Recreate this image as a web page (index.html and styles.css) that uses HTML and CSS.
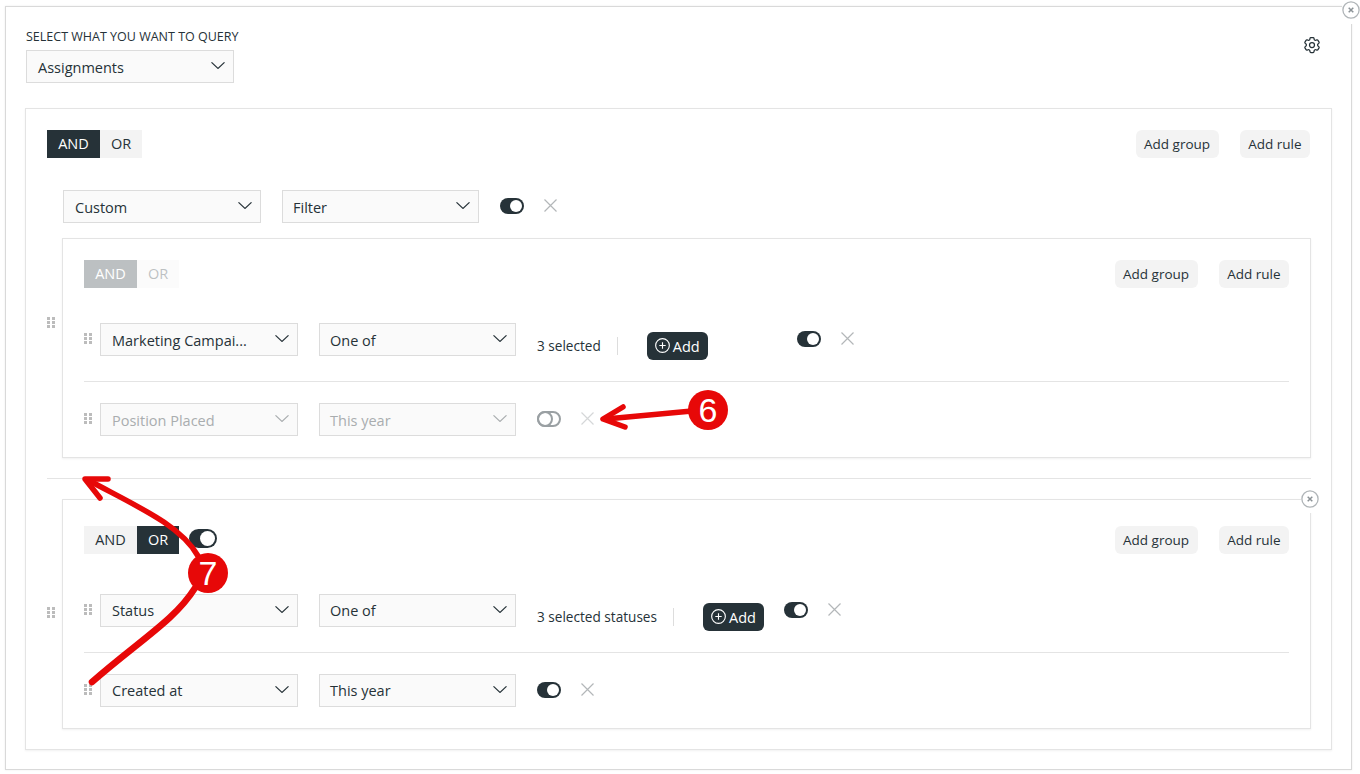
FILE: index.html
```html
<!DOCTYPE html>
<html lang="en">
<head>
    <meta charset="UTF-8">
    <meta name="viewport" content="width=device-width, initial-scale=1.0">
    <title>Query Builder</title>
    <link rel="stylesheet" href="styles.css">
</head>
<body>
    <svg class="sprite" aria-hidden="true">
        <symbol id="chevron" viewBox="0 0 14 7"><path d="M.5.3l6.5 6.2L13.500.3" fill="none" stroke="currentColor" stroke-width="1.1"/></symbol>
        <symbol id="cross" viewBox="0 0 13 13"><path d="M.5.5l12 12M12.500.5l-12 12" fill="none" stroke="currentColor" stroke-width="1.2"/></symbol>
        <symbol id="grip" viewBox="0 0 8 11"><path d="M0 0h3v3H0zM5 0h3v3H5zM0 4h3v3H0zM5 4h3v3H5zM0 8h3v3H0zM5 8h3v3H5z" fill="currentColor"/></symbol>
        <symbol id="closed" viewBox="0 0 18 18"><circle cx="9" cy="9" r="8.100" fill="#fff" stroke="#b0b5b8" stroke-width="1.3"/><path d="M6.700 6.700l4.600 4.600M11.300 6.700l-4.600 4.600" fill="none" stroke="#8b9296" stroke-width="1.500"/></symbol>
    </svg>

    <div class="panel">
        <button class="close-btn close-panel"><svg><use href="#closed"/></svg></button>

        <div class="panel-head">
            <div>
                <div class="query-label">SELECT WHAT YOU WANT TO QUERY</div>
                <div class="select select-query">Assignments<svg class="chevron"><use href="#chevron"/></svg></div>
            </div>
            <svg class="gear" viewBox="0 0 24 24" fill="none" stroke="#263238" stroke-width="1.5">
                <path d="M9.594 3.94c.09-.542.56-.94 1.11-.94h2.593c.55 0 1.02.398 1.11.94l.213 1.281c.063.374.313.686.645.87.074.04.147.083.22.127.325.196.72.257 1.075.124l1.217-.456a1.125 1.125 0 0 1 1.37.49l1.296 2.247a1.125 1.125 0 0 1-.26 1.431l-1.003.827c-.293.241-.438.613-.43.992a7.723 7.723 0 0 1 0 .255c-.008.378.137.75.43.991l1.004.827c.424.35.534.955.26 1.43l-1.298 2.247a1.125 1.125 0 0 1-1.369.491l-1.217-.456c-.355-.133-.75-.072-1.076.124a6.47 6.47 0 0 1-.22.128c-.331.183-.581.495-.644.869l-.213 1.281c-.09.543-.56.94-1.11.94h-2.594c-.55 0-1.019-.398-1.11-.94l-.213-1.281c-.062-.374-.312-.686-.644-.87a6.52 6.52 0 0 1-.22-.127c-.325-.196-.72-.257-1.076-.124l-1.217.456a1.125 1.125 0 0 1-1.369-.49l-1.297-2.247a1.125 1.125 0 0 1 .26-1.431l1.004-.827c.292-.24.437-.613.43-.991a6.932 6.932 0 0 1 0-.255c.007-.38-.138-.751-.43-.992l-1.004-.827a1.125 1.125 0 0 1-.26-1.43l1.297-2.247a1.125 1.125 0 0 1 1.37-.491l1.216.456c.356.133.751.072 1.076-.124.072-.044.146-.086.22-.128.332-.183.582-.495.644-.869l.214-1.28Z"/>
                <circle cx="12" cy="12" r="3"/>
            </svg>
        </div>

        <div class="card">
            <div class="group-head">
                <div class="logic">
                    <span class="logic-btn active">AND</span><span class="logic-btn">OR</span>
                </div>
                <div class="group-actions">
                    <button class="soft-btn">Add group</button>
                    <button class="soft-btn">Add rule</button>
                </div>
            </div>

            <div class="rule-line root-line">
                <div class="select select-first">Custom<svg class="chevron"><use href="#chevron"/></svg></div>
                <div class="select select-second">Filter<svg class="chevron"><use href="#chevron"/></svg></div>
                <span class="toggle on"></span>
                <svg class="cross"><use href="#cross"/></svg>
            </div>

            <div class="group-row">
                <svg class="grip grip-outer grip-one"><use href="#grip"/></svg>
                <div class="group group-one">
                    <div class="group-head">
                        <div class="logic muted">
                            <span class="logic-btn active">AND</span><span class="logic-btn">OR</span>
                        </div>
                        <div class="group-actions">
                            <button class="soft-btn">Add group</button>
                            <button class="soft-btn">Add rule</button>
                        </div>
                    </div>
                    <div class="rule first-rule">
                        <svg class="grip"><use href="#grip"/></svg>
                        <div class="select select-first">Marketing Campai...<svg class="chevron"><use href="#chevron"/></svg></div>
                        <div class="select select-second">One of<svg class="chevron"><use href="#chevron"/></svg></div>
                        <span class="picked">3 selected</span>
                        <button class="add-btn">
                            <svg viewBox="0 0 16 16" fill="none" stroke="#fff" stroke-width="1.2"><circle cx="8" cy="8" r="7.300"/><path d="M8 4.600v6.800M4.600 8h6.800"/></svg>
                            Add
                        </button>
                        <span class="toggle on toggle-far"></span>
                        <svg class="cross"><use href="#cross"/></svg>
                    </div>
                    <div class="rule disabled">
                        <svg class="grip"><use href="#grip"/></svg>
                        <div class="select select-first">Position Placed<svg class="chevron"><use href="#chevron"/></svg></div>
                        <div class="select select-second">This year<svg class="chevron"><use href="#chevron"/></svg></div>
                        <span class="toggle off"></span>
                        <svg class="cross"><use href="#cross"/></svg>
                    </div>
                </div>
            </div>

            <div class="group-divider"></div>

            <div class="group-row">
                <svg class="grip grip-outer grip-two"><use href="#grip"/></svg>
                <div class="group group-two">
                    <button class="close-btn close-group"><svg><use href="#closed"/></svg></button>
                    <div class="group-head">
                        <div class="logic">
                            <span class="logic-btn">AND</span><span class="logic-btn active">OR</span>
                            <span class="toggle on toggle-large"></span>
                        </div>
                        <div class="group-actions">
                            <button class="soft-btn">Add group</button>
                            <button class="soft-btn">Add rule</button>
                        </div>
                    </div>
                    <div class="rule first-rule">
                        <svg class="grip"><use href="#grip"/></svg>
                        <div class="select select-first">Status<svg class="chevron"><use href="#chevron"/></svg></div>
                        <div class="select select-second">One of<svg class="chevron"><use href="#chevron"/></svg></div>
                        <span class="picked">3 selected statuses</span>
                        <button class="add-btn">
                            <svg viewBox="0 0 16 16" fill="none" stroke="#fff" stroke-width="1.2"><circle cx="8" cy="8" r="7.300"/><path d="M8 4.600v6.800M4.600 8h6.800"/></svg>
                            Add
                        </button>
                        <span class="toggle on"></span>
                        <svg class="cross"><use href="#cross"/></svg>
                    </div>
                    <div class="rule">
                        <svg class="grip"><use href="#grip"/></svg>
                        <div class="select select-first">Created at<svg class="chevron"><use href="#chevron"/></svg></div>
                        <div class="select select-second">This year<svg class="chevron"><use href="#chevron"/></svg></div>
                        <span class="toggle on"></span>
                        <svg class="cross"><use href="#cross"/></svg>
                    </div>
                </div>
            </div>
        </div>
    </div>

    <!-- red callouts drawn over the screenshot -->
    <svg class="callouts" viewBox="0 0 1360 774">
        <g fill="none" stroke="#e70808" stroke-width="5.500" stroke-linecap="round" stroke-linejoin="round">
            <path d="M692 411L606 419"/>
            <path d="M623 407L603 419L625 427"/>
            <path d="M198 556C180 525 140 508 88 480"/>
            <path d="M108 479H85L100 498"/>
            <path d="M195 588C175 620 140 640 92 682" stroke-width="6.500"/>
        </g>
        <circle cx="708" cy="410" r="20" fill="#e70808"/>
        <circle cx="208" cy="573" r="20" fill="#e70808"/>
        <text class="callout-num" x="708" y="422">6</text>
        <text class="callout-num" x="208" y="585">7</text>
    </svg>
</body>
</html>
```
FILE: styles.css
```css
:root {
    --dark-color: #263238;
    --border-color: #e4e4e4;
    --field-border: #dcdcdc;
    --soft-color: #f3f3f3;
}
body {
    font-family: "Open Sans", Arial, sans-serif;
    font-size: 13.6px;
    color: var(--dark-color);
    background-color: #fff;
    margin: 0;
    position: relative;
    height: 774px;
    overflow: hidden;
}
button { font-family: inherit; color: inherit; }
.sprite { display: none; }

.panel {
    position: relative;
    box-sizing: border-box;
    width: 1347px;
    height: 764px;
    margin: 0 0 0 5px;
    top: 6px;
    padding: 22px 19px 19px;
    border: 1px solid #d9d9d9;
    box-shadow: 0 0 2px rgba(0, 0, 0, 0.08);
}
.panel-head {
    display: flex;
    justify-content: space-between;
    padding: 0 10px 0 1px;
    margin-bottom: 25px;
}
.query-label { font-size: 12.5px; line-height: 15px; margin-bottom: 6px; }
.gear { width: 20px; height: 20px; margin-top: 6px; }

/* white box hides the border just under the circle */
.close-btn {
    position: absolute;
    display: flex;
    align-items: flex-start;
    width: 18px;
    height: 23px;
    padding: 0;
    border: none;
    background-color: #fff;
}
.close-btn svg { display: block; width: 18px; height: 18px; }
.close-panel { top: -6px; right: -9px; }
.close-group { top: -10px; right: -9px; }

.card {
    box-sizing: border-box;
    height: 642px;
    padding: 21px 20px 0 21px;
    border: 1px solid var(--border-color);
    box-shadow: 0 1px 2px rgba(0, 0, 0, 0.06);
}

.select {
    position: relative;
    box-sizing: border-box;
    width: 198px;
    height: 33px;
    flex: none;
    padding-left: 11px;
    line-height: 33px;
    font-size: 14.5px;
    background-color: #fafafa;
    border: 1px solid var(--field-border);
}
.select-query { width: 208px; }
.select-second { width: 197px; margin-left: 21px; padding-left: 10px; }
.chevron { position: absolute; right: 8px; top: 11px; width: 14px; height: 7px; }
.group-two .select { line-height: 31px; }

.group-head { display: flex; justify-content: space-between; height: 28px; margin-right: 1px; }
.group-row > .group .group-head { margin-right: 0; }
.logic { display: flex; font-size: 14.5px; }
.logic-btn {
    height: 28px;
    padding: 0 11px;
    line-height: 28px;
    background-color: var(--soft-color);
}
.logic-btn.active { color: #fff; background-color: var(--dark-color); }
.logic-btn:first-child { width: 53px; box-sizing: border-box; padding: 0; text-align: center; }
.logic.muted { opacity: 0.3; }
.group-actions { display: flex; gap: 21px; }
.soft-btn {
    height: 28px;
    padding: 0 8.5px 1px;
    font-size: 13.5px;
    background-color: var(--soft-color);
    border: none;
    border-radius: 6px;
}

.rule-line, .rule { display: flex; align-items: flex-start; }
.root-line { margin: 32px 0 15px 16px; }

.toggle {
    box-sizing: border-box;
    display: block;
    flex: none;
    position: relative;
    width: 24px;
    height: 16px;
    margin: 8px 0 0 21px;
    border-radius: 8px;
    background-color: var(--dark-color);
}
.toggle::after {
    content: "";
    position: absolute;
    top: 2px;
    right: 2px;
    width: 12px;
    height: 12px;
    border-radius: 50%;
    background-color: #fff;
}
.toggle.off { background-color: #fff; border: 2px solid #9aa0a3; }
.toggle.off::after { top: -2px; right: auto; left: -2px; width: 16px; height: 16px; box-sizing: border-box; background: none; border: 2px solid #9aa0a3; }
.toggle-far { margin-left: 89px; }
.toggle-large { width: 28px; height: 19px; margin: 3px 0 0 10px; border-radius: 10px; }
.toggle-large::after { width: 15px; height: 15px; }

.cross { flex: none; width: 13px; height: 13px; margin: 9px 0 0 20px; color: #b3b7b9; }

.group-row { display: flex; }
.grip { flex: none; width: 8px; height: 11px; color: #bcbcbc; }
.grip-outer { margin-right: 7px; }
.grip-one { margin-top: 79px; }
.grip-two { margin-top: 108px; }

.group {
    position: relative;
    box-sizing: border-box;
    flex: 1;
    padding: 21px 21px 0;
    border: 1px solid var(--border-color);
    box-shadow: 0 1px 2px rgba(0, 0, 0, 0.06);
}
.group-one { height: 220px; }
.group-two { height: 230px; padding-top: 26px; }
.group-divider { height: 1px; margin: 20px 0; background-color: var(--border-color); }

.rule { padding: 21px 0; }
.rule .grip { margin: 10px 8px 0 0; }
/* the Add button makes this row 37px tall */
.first-rule { padding: 0 0 21px; margin-top: 35px; border-bottom: 1px solid var(--border-color); }
.group-two .first-rule { margin-top: 40px; }

.picked {
    flex: none;
    margin: 14px 0 0 21px;
    padding-right: 16px;
    line-height: 18px;
    border-right: 1px solid #ddd;
}
.add-btn {
    display: flex;
    align-items: center;
    gap: 3px;
    flex: none;
    height: 28px;
    margin: 9px 0 0 29px;
    padding: 0 8px;
    font-size: 14.5px;
    color: #fff;
    background-color: var(--dark-color);
    border: none;
    border-radius: 6px;
}
.add-btn svg { width: 15px; height: 15px; margin-top: -2px; }
.add-btn + .toggle { margin-left: 20px; }
.add-btn + .toggle-far { margin-left: 89px; }

.disabled .select { color: #a9adaf; }
.disabled .chevron { color: #a9adaf; }
.disabled .cross { color: #d5d7d8; }

.callouts { position: absolute; left: 0; top: 0; width: 1360px; height: 774px; pointer-events: none; }
.callout-num {
    font-family: "Liberation Sans", Arial, sans-serif;
    font-size: 34px;
    fill: #fff;
    text-anchor: middle;
}
```
